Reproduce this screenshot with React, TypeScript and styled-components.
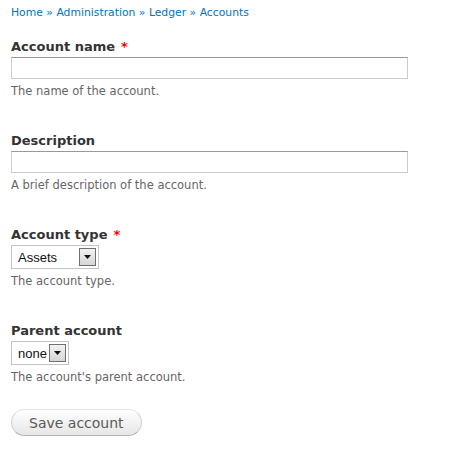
import React from "react";
import styled, { createGlobalStyle } from "styled-components";

const GlobalStyle = createGlobalStyle`
  html, body {
    margin: 0;
    padding: 0;
    background: #ffffff;
  }
  body {
    font-family: "DejaVu Sans", Verdana, sans-serif;
    color: #333333;
  }
`;

const Page = styled.div`
  padding: 4px 0 0 11px;
  width: 397px;
`;

const Breadcrumb = styled.nav`
  font-size: 10.8px;
  line-height: 18px;
  color: #0074bd;
  margin-bottom: 17px;
`;

const Crumb = styled.a`
  color: #0074bd;
  text-decoration: none;
`;

const Form = styled.form`
  display: flex;
  flex-direction: column;
  align-items: flex-start;
`;

const FormItem = styled.div`
  display: flex;
  flex-direction: column;
  align-items: flex-start;
  width: 100%;
  margin-bottom: 34px;
`;

const Label = styled.label`
  display: block;
  font-size: 13px;
  font-weight: bold;
  line-height: 16px;
  color: #333333;
  margin-bottom: 2px;
`;

const Required = styled.span`
  color: #ff0000;
  margin-left: 6px;
`;

const TextInput = styled.input`
  box-sizing: border-box;
  width: 397px;
  height: 22px;
  margin: 0;
  padding: 2px;
  border: 1px solid #cccccc;
  border-top-color: #999999;
  font-family: "DejaVu Sans", Verdana, sans-serif;
  font-size: 13px;
  outline: none;
`;

const Description = styled.div`
  font-size: 11.5px;
  line-height: 16px;
  color: #666666;
  margin-top: 4px;
`;

const SelectBox = styled.div<{ $width: number }>`
  box-sizing: border-box;
  width: ${(p) => p.$width}px;
  height: 24px;
  display: flex;
  align-items: center;
  justify-content: space-between;
  padding: 0 2px 0 6px;
  border: 1px solid #c4c4c4;
  background: #ffffff;
`;

const SelectValue = styled.span`
  font-family: "Liberation Sans", Arial, sans-serif;
  font-size: 13px;
  color: #111111;
`;

const ArrowButton = styled.span`
  box-sizing: border-box;
  width: 17px;
  height: 18px;
  display: flex;
  align-items: center;
  justify-content: center;
  border: 1px solid #6f6f6f;
  background: linear-gradient(#f2f2f2, #d6d6d6);
`;

const SaveButton = styled.button`
  margin-top: -10px;
  box-sizing: border-box;
  height: 27px;
  padding: 0 17px;
  font-family: "DejaVu Sans", Verdana, sans-serif;
  font-size: 14px;
  color: #5a5a5a;
  border: 1px solid #e4e4e4;
  border-bottom-color: #b4b4b4;
  border-left-color: #d2d2d2;
  border-right-color: #d2d2d2;
  border-radius: 15px;
  background: linear-gradient(#ffffff, #e6e6e6);
  cursor: pointer;
`;

const Arrow = () => (
  <svg width="7" height="4" viewBox="0 0 7 4">
    <polygon points="0,0 7,0 3.5,4" fill="#111111" />
  </svg>
);

const Select = ({ value, width }: { value: string; width: number }) => (
  <SelectBox $width={width}>
    <SelectValue>{value}</SelectValue>
    <ArrowButton>
      <Arrow />
    </ArrowButton>
  </SelectBox>
);

export default function App() {
  return (
    <>
      <GlobalStyle />
      <Page>
        <Breadcrumb>
          <Crumb href="#">Home</Crumb> » <Crumb href="#">Administration</Crumb> »{" "}
          <Crumb href="#">Ledger</Crumb> » <Crumb href="#">Accounts</Crumb>
        </Breadcrumb>
        <Form onSubmit={(e) => e.preventDefault()}>
          <FormItem>
            <Label>
              Account name<Required>*</Required>
            </Label>
            <TextInput type="text" />
            <Description>The name of the account.</Description>
          </FormItem>
          <FormItem>
            <Label>Description</Label>
            <TextInput type="text" />
            <Description>A brief description of the account.</Description>
          </FormItem>
          <FormItem>
            <Label>
              Account type<Required>*</Required>
            </Label>
            <Select value="Assets" width={88} />
            <Description>The account type.</Description>
          </FormItem>
          <FormItem>
            <Label>Parent account</Label>
            <Select value="none" width={58} />
            <Description>The account's parent account.</Description>
          </FormItem>
          <SaveButton type="submit">Save account</SaveButton>
        </Form>
      </Page>
    </>
  );
}
